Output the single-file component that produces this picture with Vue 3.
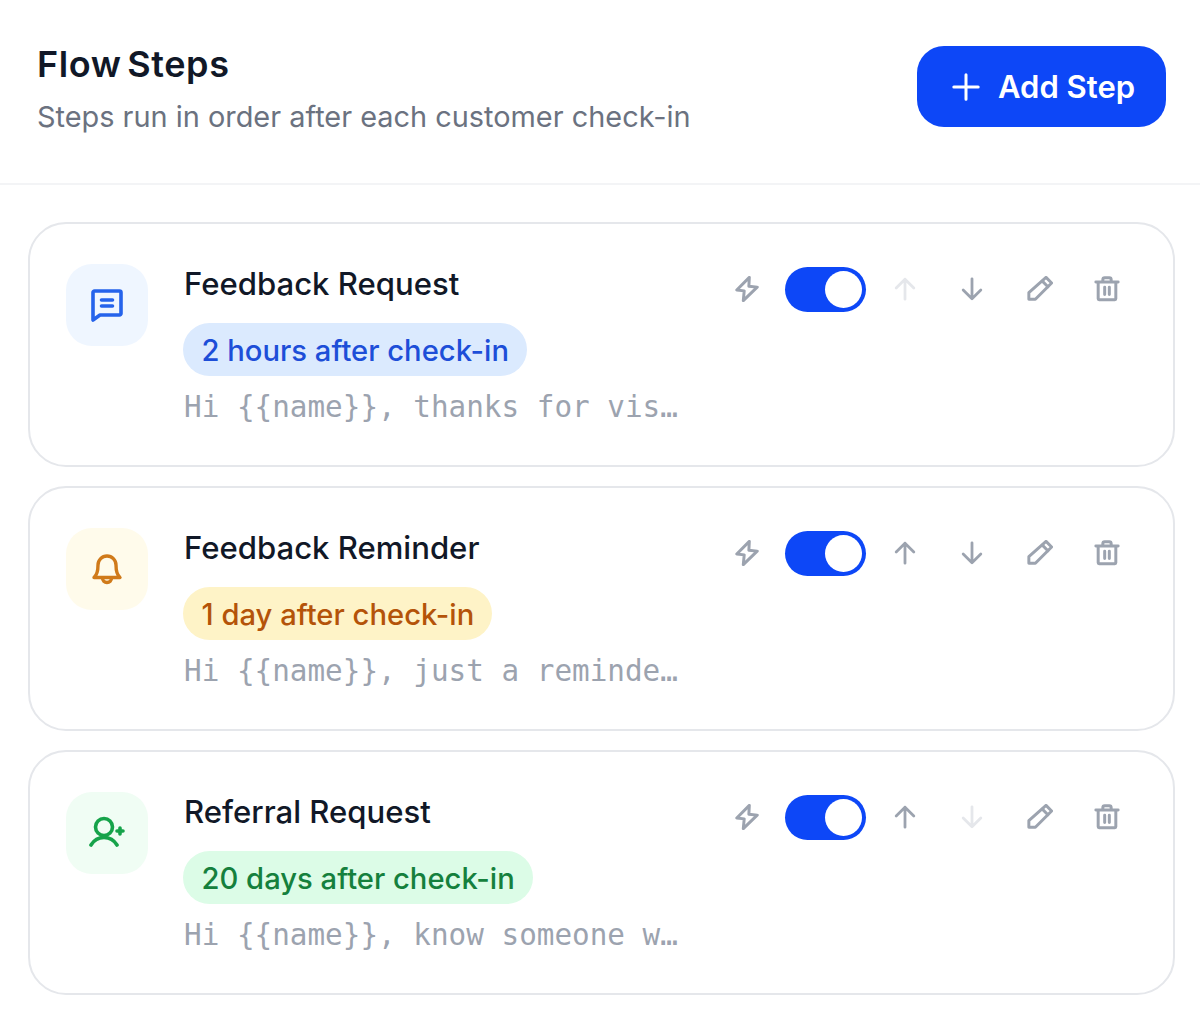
<script setup>
const steps = [
  {
    id: 1,
    name: 'Feedback Request',
    delay: '2 hours after check-in',
    message: 'Hi {{name}}, thanks for vis…',
    tone: 'blue',
    icon: 'message',
    upOff: true,
    downOff: false
  },
  {
    id: 2,
    name: 'Feedback Reminder',
    delay: '1 day after check-in',
    message: 'Hi {{name}}, just a reminde…',
    tone: 'amber',
    icon: 'bell',
    upOff: false,
    downOff: false
  },
  {
    id: 3,
    name: 'Referral Request',
    delay: '20 days after check-in',
    message: 'Hi {{name}}, know someone w…',
    tone: 'green',
    icon: 'user',
    upOff: false,
    downOff: true
  }
];
</script>

<template>
  <div class="page">
    <header class="head">
      <div class="intro">
        <h1 class="title">Flow Steps</h1>
        <p class="sub">Steps run in order after each customer check-in</p>
      </div>
      <button class="add" type="button">
        <svg class="plus" viewBox="0 0 32 32" fill="none" stroke="currentColor" stroke-width="3.200" stroke-linecap="round">
          <path d="M16 3v26M3 16h26" />
        </svg>
        Add Step
      </button>
    </header>

    <main class="list">
      <article v-for="step in steps" :key="step.id" class="card">
        <div class="badge" :class="step.tone">
          <svg v-if="step.icon === 'message'" viewBox="0 0 36 36" fill="none" stroke="currentColor" stroke-width="3.600" stroke-linecap="round" stroke-linejoin="round">
            <path d="M4 5.500A1.500 1.500 0 0 1 5.500 4h25A1.500 1.500 0 0 1 32 5.500v21a1.500 1.500 0 0 1-1.500 1.500H11l-7 5z" />
            <path d="M12.500 13h11M12.500 19h11" />
          </svg>
          <svg v-else-if="step.icon === 'bell'" viewBox="0 0 36 36" fill="none" stroke="currentColor" stroke-width="3.400" stroke-linecap="round" stroke-linejoin="round">
            <path d="M9 14a9 9 0 0 1 18 0c0 7 1 10 4 12.500H5C8 24 9 21 9 14z" />
            <path d="M13.500 27a4.500 4.500 0 0 0 9 0" />
          </svg>
          <svg v-else viewBox="0 0 36 36" fill="none" stroke="currentColor" stroke-width="3.600" stroke-linecap="round" stroke-linejoin="round">
            <circle cx="15" cy="12" r="8.500" />
            <path d="M2 30c3-5 8-7.500 13-7.500S25 25 28 30" />
            <path d="M31 13v6M28 16h6" />
          </svg>
        </div>

        <div class="body">
          <h2 class="name">{{ step.name }}</h2>
          <span class="pill" :class="step.tone">{{ step.delay }}</span>
          <p class="msg">{{ step.message }}</p>
        </div>

        <div class="actions">
          <button class="act" type="button">
            <svg viewBox="0 0 28 28" fill="none" stroke="currentColor" stroke-width="3.200" stroke-linecap="round" stroke-linejoin="round">
              <path d="M16.500 1.500 3 15l8 1-1 10.500L25 12l-9-1z" />
            </svg>
          </button>
          <span class="toggle"><span class="knob"></span></span>
          <button class="act" :class="{ off: step.upOff }" type="button">
            <svg viewBox="0 0 28 28" fill="none" stroke="currentColor" stroke-width="3" stroke-linecap="round" stroke-linejoin="round">
              <path d="M14 25V3.500M4.500 13 14 3.500l9.500 9.500" />
            </svg>
          </button>
          <button class="act" :class="{ off: step.downOff }" type="button">
            <svg viewBox="0 0 28 28" fill="none" stroke="currentColor" stroke-width="3" stroke-linecap="round" stroke-linejoin="round">
              <path d="M14 3v21.500M4.500 15l9.500 9.500 9.500-9.500" />
            </svg>
          </button>
          <button class="act" type="button">
            <svg viewBox="0 0 28 28" fill="none" stroke="currentColor" stroke-width="3.200" stroke-linecap="round" stroke-linejoin="round">
              <path d="M20.500 1.500 26.500 7.500 9 25H2v-7z" />
              <path d="m16.500 5.500 6 6" />
            </svg>
          </button>
          <button class="act" type="button">
            <svg viewBox="0 0 28 28" fill="none" stroke="currentColor" stroke-width="3.200" stroke-linecap="round" stroke-linejoin="round">
              <path d="M2 6.500h24M9.500 6.500V4a2 2 0 0 1 2-2h5a2 2 0 0 1 2 2v2.500M4.500 6.500v18a1 1 0 0 0 1 1h17a1 1 0 0 0 1-1v-18" />
              <path d="M11.500 12v8M16.500 12v8" />
            </svg>
          </button>
        </div>
      </article>
    </main>
  </div>
</template>

<style>
html,
body {
  background: #fff;
}
</style>

<style scoped>
.page {
  height: 1021px;
  background: #fff;
  font-family: Inter, "Liberation Sans", sans-serif;
  overflow: hidden;
}

.head {
  display: flex;
  align-items: flex-start;
  justify-content: space-between;
  height: 185px;
  padding: 46px 34px 0 37px;
  box-sizing: border-box;
  border-bottom: 2px solid #f3f4f6;
}

.intro {
  margin-top: -4px;
}

.title {
  margin: 0;
  font-size: 36px;
  line-height: 44px;
  font-weight: 600;
  letter-spacing: 0.6px;
  word-spacing: -4px;
  color: #111827;
}

.sub {
  margin: 13px 0 0;
  font-size: 28.900px;
  line-height: 36px;
  color: #6b7280;
}

.add {
  display: flex;
  align-items: center;
  gap: 17px;
  height: 81px;
  width: 249px;
  padding: 0 0 0 34px;
  box-sizing: border-box;
  border: none;
  border-radius: 27px;
  background: #0d47f7;
  color: #fff;
  font: 600 31px Inter, sans-serif;
}

.plus {
  width: 30px;
  height: 30px;
}

.list {
  display: flex;
  flex-direction: column;
  gap: 19px;
  padding: 37px 25px 0 28px;
}

.card {
  display: flex;
  align-items: flex-start;
  height: 245px;
  box-sizing: border-box;
  padding: 40px 34px 0 36px;
  border: 2px solid #e5e7eb;
  border-radius: 38px;
}

.badge {
  flex: none;
  display: flex;
  align-items: center;
  justify-content: center;
  width: 82px;
  height: 82px;
  border-radius: 26px;
}

.badge svg {
  width: 36px;
  height: 36px;
}

.badge.blue {
  background: #eff6ff;
  color: #2563eb;
}

.badge.amber {
  background: #fffbeb;
  color: #d07a1a;
}

.badge.green {
  background: #f0fdf4;
  color: #16a34a;
}

.body {
  flex: 1;
  min-width: 0;
  margin-left: 36px;
}

.name {
  margin: 0;
  font-size: 31.100px;
  line-height: 40px;
  font-weight: 500;
  color: #111827;
}

.pill {
  display: inline-block;
  margin: 19px 0 0 -1px;
  padding: 0 18px 0 18.500px;
  height: 53px;
  line-height: 55px;
  border-radius: 27px;
  font-size: 29.200px;
  font-weight: 500;
}

.pill.blue {
  background: #dbeafe;
  color: #1d4ed8;
}

.pill.amber {
  background: #fef3c7;
  color: #b45309;
}

.pill.green {
  background: #dcfce7;
  color: #15803d;
}

.msg {
  margin: 9px 0 0;
  font-family: "DejaVu Sans Mono", monospace;
  font-size: 29.300px;
  line-height: 44px;
  color: #9ca3af;
  white-space: nowrap;
}

.actions {
  flex: none;
  display: flex;
  align-items: center;
  gap: 4px;
  margin-top: 3px;
}

.act {
  display: flex;
  align-items: center;
  justify-content: center;
  width: 63.500px;
  height: 45px;
  box-sizing: border-box;
  padding: 0 0 2px;
  border: none;
  background: none;
  color: #9ca3af;
}

.act svg {
  width: 26px;
  height: 26px;
}

.act.off {
  color: #e5e7eb;
}

.toggle {
  display: flex;
  align-items: center;
  justify-content: flex-end;
  width: 81px;
  height: 45px;
  margin: 0 3px 0 2px;
  box-sizing: border-box;
  padding-right: 4px;
  border-radius: 23px;
  background: #0d47f7;
}

.knob {
  width: 37px;
  height: 37px;
  border-radius: 50%;
  background: #fff;
}
</style>
